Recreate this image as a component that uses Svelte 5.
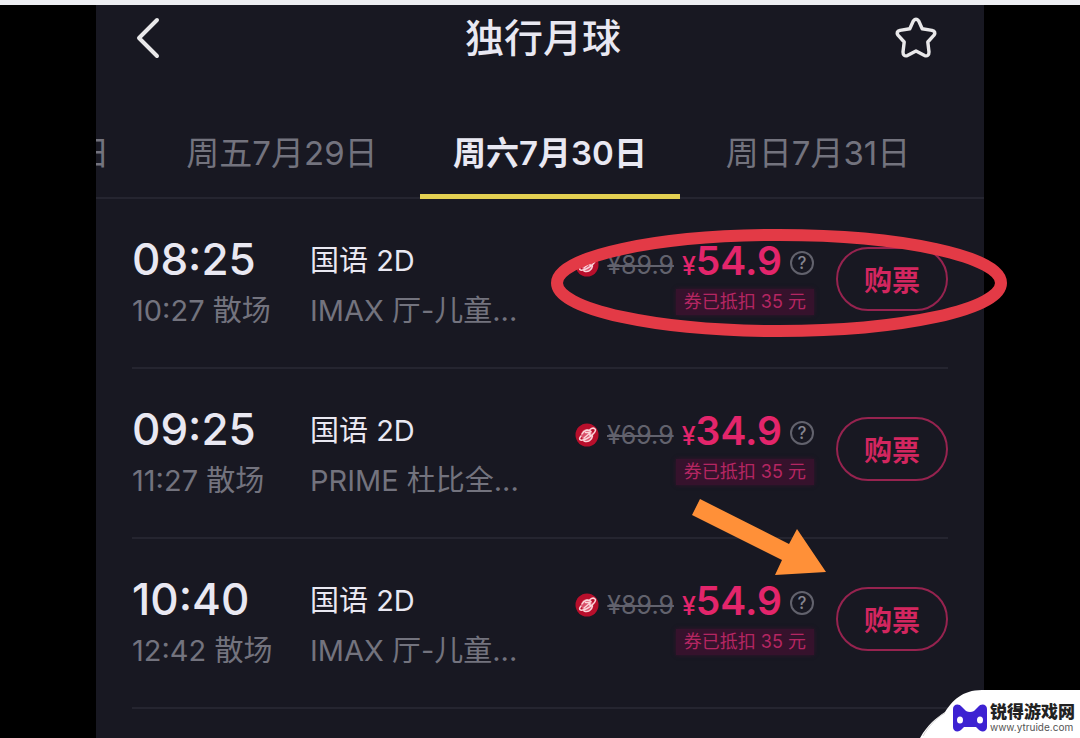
<script>
  const tabs = ["周四7月28日", "周五7月29日", "周六7月30日", "周日7月31日"];
  let activeTab = $state(2);
  let starred = $state(false);

  const shows = [
    { start: "08:25", end: "10:27", hall: "IMAX 厅-儿童...", oldPrice: "89.9", price: "54.9" },
    { start: "09:25", end: "11:27", hall: "PRIME 杜比全...", oldPrice: "69.9", price: "34.9" },
    { start: "10:40", end: "12:42", hall: "IMAX 厅-儿童...", oldPrice: "89.9", price: "54.9" },
  ];
</script>

<div class="page">
  <main class="phone">
    <header class="header">
      <button class="icon-button back" aria-label="返回">
        <svg width="26" height="42" viewBox="0 0 26 42" fill="none">
          <path d="M23 3 5 21 23 39" stroke="currentColor" stroke-width="4" stroke-linecap="round" stroke-linejoin="round" />
        </svg>
      </button>
      <h1>独行月球</h1>
      <button
        class="icon-button"
        aria-label="收藏"
        aria-pressed={starred}
        onclick={() => (starred = !starred)}
      >
        <svg width="44" height="42" viewBox="0 0 44 42" fill={starred ? "currentColor" : "none"}>
          <path
            d="M19.4 3.8Q22 .8 24.6 3.8L28.200 11.800 38 13.400Q42.400 14.600 40 18.200L33.800 25 35 35Q35 39.800 30.600 38.600L22 34 13.400 38.600Q9 39.800 9 35L10.200 25 4 18.200Q1.600 14.600 6 13.400L15.800 11.800Z"
            stroke="currentColor"
            stroke-width="3.4"
            stroke-linejoin="round"
          />
        </svg>
      </button>
    </header>

    <nav class="tabs">
      {#each tabs as tab, i}
        <button class="tab" class:active={i === activeTab} onclick={() => (activeTab = i)}>
          {tab}
        </button>
      {/each}
    </nav>

    <ul class="shows">
      {#each shows as show}
        <li class="show">
          <div class="times">
            <span class="start">{show.start}</span>
            <span class="sub">{show.end} 散场</span>
          </div>
          <div class="info">
            <span class="format">国语 2D</span>
            <span class="sub">{show.hall}</span>
          </div>
          <div class="pricing">
            <div class="price-line">
              <svg class="planet" width="24" height="24" viewBox="0 0 24 24" fill="none">
                <circle cx="12" cy="12" r="11.5" fill="#b80f2c" />
                <circle cx="12" cy="12" r="6" fill="#d9506a" />
                <path
                  d="M6 13c-4 5 1 5 6 2.500s10-7.500 8-9.500-5 .5-5 .5M7 11c2-4 6-5 9-2.500M9 15l6-5M10.500 9.500H15v3M9 18c4 1.500 8-1 8.500-5"
                  stroke="#fbd5da"
                  stroke-width="1.5"
                  stroke-linecap="round"
                />
              </svg>
              <s>¥{show.oldPrice}</s>
              <strong><small>¥</small>{show.price}</strong>
              <button class="help" aria-label="价格说明">?</button>
            </div>
            <span class="coupon">券已抵扣 35 元</span>
          </div>
          <button class="buy">购票</button>
        </li>
      {/each}
    </ul>
  </main>

  <!-- Hand-drawn marks over the list -->
  <svg class="ring" width="456" height="110" viewBox="0 0 456 110" fill="none" aria-hidden="true">
    <ellipse cx="228" cy="55" rx="222" ry="48" stroke="#e33a46" stroke-width="12" />
  </svg>
  <svg class="arrow" width="136" height="78" viewBox="0 0 136 78" aria-hidden="true">
    <path d="M9 0 98 45 106 30 135 73 84 76 91 61 1 16Z" fill="#ff9038" />
  </svg>

  <a class="watermark" href="http://www.ytruide.com">
    <svg class="watermark-shape" width="160" height="48" viewBox="0 0 160 48" aria-hidden="true">
      <path d="M0 48C8 34 16 28 25 22 32 11 42 0 62 0H160V48Z" fill="#fff" />
      <path d="M3 46C8 37 16 28 25 23" fill="none" stroke="#aaa" stroke-width=".5" />
    </svg>
    <svg class="gamepad" width="36" height="28" viewBox="0 0 36 28" aria-hidden="true">
      <path
        d="M1 5C1 0 7-1 10 3L14 7Q18 9 22 7L26 3C29-1 35 0 35 5V23C35 28 29 29 26 25L24 23H12L10 25C7 29 1 28 1 23Z"
        fill="#3d22d2"
      />
      <ellipse cx="8" cy="16" rx="3" ry="3.5" fill="#fff" />
      <ellipse cx="28" cy="16" rx="3" ry="3.5" fill="#fff" />
    </svg>
    <span class="watermark-text">
      <b>锐得游戏网</b>
      <span>www.ytruide.com</span>
    </span>
  </a>
</div>

<style>
  :global(body) {
    margin: 0;
    background: #000;
  }

  .page {
    position: relative;
    min-height: 100vh;
    box-sizing: border-box;
    display: flex;
    flex-direction: column;
    padding: 0 96px;
    border-top: 5px solid #edeef2;
    background: #000;
    overflow: hidden;
    font-family: Inter, "Noto Sans CJK SC", sans-serif;
  }

  button {
    padding: 0;
    border: none;
    background: none;
    font-family: inherit;
    cursor: pointer;
  }

  .phone {
    flex: 1;
    background: #181822;
    color: #e9e8f2;
  }

  /* Header */
  .header {
    display: flex;
    align-items: center;
    height: 66px;
    padding: 0 46px 0 38px;
  }

  .header h1 {
    flex: 1;
    margin: 0;
    font-size: 39px;
    font-weight: 500;
    line-height: 56px;
    text-align: center;
  }

  .icon-button {
    display: flex;
    color: #e9e8ea;
  }

  .back {
    width: 58px;
  }

  /* Date tabs */
  .tabs {
    display: flex;
    justify-content: flex-end;
    gap: 8px;
    height: 128px;
    padding-right: 36px;
    box-shadow: inset 0 -2px #252530;
    overflow: hidden;
  }

  .tab {
    flex: none;
    width: 260px;
    padding-top: 40px;
    border-bottom: 5px solid transparent;
    color: #73737e;
    font-size: 33px;
    line-height: 48px;
  }

  .tab.active {
    border-color: #e3d052;
    color: #e9e8f2;
    font-weight: 600;
  }

  /* Show list */
  .shows {
    margin: 0;
    padding: 0 36px;
    list-style: none;
  }

  .show {
    display: flex;
    align-items: flex-start;
    height: 168px;
    border-bottom: 2px solid #252530;
  }

  .times,
  .info {
    display: flex;
    flex-direction: column;
    white-space: nowrap;
  }

  .times {
    width: 178px;
    padding-top: 32px;
  }

  .info {
    flex: 1;
    padding-top: 36px;
  }

  .start {
    font-size: 44px;
    font-weight: 500;
    line-height: 56px;
  }

  .format {
    font-size: 29px;
    line-height: 52px;
  }

  .sub {
    color: #73737e;
    font-size: 29px;
    line-height: 48px;
  }

  .pricing {
    display: flex;
    flex-direction: column;
    align-items: flex-end;
    padding: 40px 22px 0 0;
  }

  .price-line {
    display: flex;
    align-items: center;
    gap: 8px;
    height: 48px;
  }

  .planet {
    margin-top: 4px;
  }

  .price-line s {
    padding-top: 4px;
    color: #62626d;
    font-size: 25px;
    line-height: 32px;
  }

  .price-line strong {
    color: #e3256b;
    font-size: 39px;
    font-weight: 600;
    line-height: 48px;
  }

  .price-line small {
    font-size: 25px;
    font-weight: 500;
  }

  .help {
    box-sizing: border-box;
    width: 24px;
    height: 24px;
    border: 2px solid #62626d;
    border-radius: 50%;
    color: #85858f;
    font-size: 17px;
    font-weight: 500;
    line-height: 20px;
  }

  .coupon {
    margin-top: 2px;
    padding: 0 8px;
    background: #36122c;
    box-shadow: 0 0 4px #36122c;
    color: #b52662;
    font-size: 18px;
    line-height: 26px;
  }

  .buy {
    box-sizing: border-box;
    width: 112px;
    height: 64px;
    margin-top: 48px;
    border: 2px solid #96234f;
    border-radius: 32px;
    color: #d3265f;
    font-size: 28px;
    font-weight: 600;
  }

  /* Marks */
  .ring {
    position: absolute;
    top: 223px;
    right: 73px;
  }

  .arrow {
    position: absolute;
    top: 494px;
    right: 253px;
  }

  /* Watermark */
  .watermark {
    position: absolute;
    right: 0;
    bottom: 0;
    display: flex;
    align-items: center;
    justify-content: flex-end;
    gap: 2px;
    width: 160px;
    height: 48px;
    box-sizing: border-box;
    padding: 8px 5px 0 0;
    text-decoration: none;
  }

  .watermark-shape {
    position: absolute;
    right: 0;
    bottom: 0;
  }

  .gamepad,
  .watermark-text {
    position: relative;
  }

  .watermark-text {
    display: flex;
    flex-direction: column;
    color: #555;
    font-size: 10px;
    line-height: 12px;
    white-space: nowrap;
  }

  .watermark-text b {
    color: #222;
    font-size: 17px;
    font-weight: 900;
    line-height: 18px;
  }
</style>
